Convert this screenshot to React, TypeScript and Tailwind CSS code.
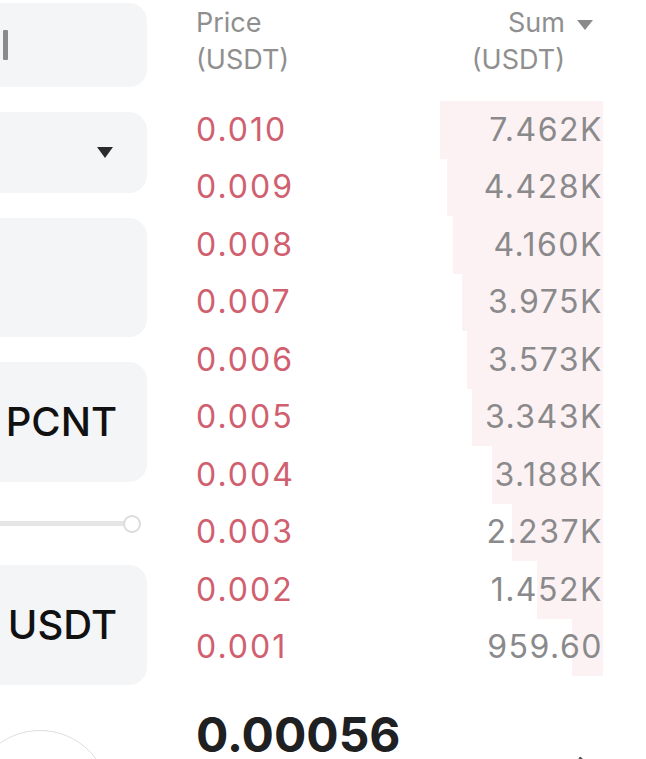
import { ChevronRight } from "lucide-react";

type Level = { price: string; sum: string; barLeft: number };

// bar left edges measured against a 407px-wide column that starts at x=196
const asks: Level[] = [
  { price: "0.010", sum: "7.462K", barLeft: 244 },
  { price: "0.009", sum: "4.428K", barLeft: 251 },
  { price: "0.008", sum: "4.160K", barLeft: 257 },
  { price: "0.007", sum: "3.975K", barLeft: 266 },
  { price: "0.006", sum: "3.573K", barLeft: 271 },
  { price: "0.005", sum: "3.343K", barLeft: 276 },
  { price: "0.004", sum: "3.188K", barLeft: 296 },
  { price: "0.003", sum: "2.237K", barLeft: 316 },
  { price: "0.002", sum: "1.452K", barLeft: 341 },
  { price: "0.001", sum: "959.60", barLeft: 376 },
];

const OrderForm = () => {
  return (
    <div className="-ml-[40px] flex w-[187px] shrink-0 flex-col pt-[3px]">
      {/* order type (text cut off) */}
      <div className="flex h-[84px] shrink-0 items-center rounded-[18px] bg-[#f4f5f7] pl-[43px]">
        <div className="h-[30px] w-[5px] rounded-[1px] bg-[#8a8a8a]" />
      </div>

      {/* dropdown */}
      <div className="mt-[25px] flex h-[81px] shrink-0 items-center justify-end rounded-[18px] bg-[#f4f5f7] pr-[34px]">
        <svg width="16" height="11" viewBox="0 0 16 11">
          <path d="M0 0H16L8 11Z" fill="#2b2b2b" />
        </svg>
      </div>

      {/* price input */}
      <div className="mt-[25px] h-[119px] shrink-0 rounded-[18px] bg-[#f4f5f7]" />

      {/* quantity */}
      <div className="mt-[25px] flex h-[120px] shrink-0 items-center justify-end rounded-[18px] bg-[#f4f5f7] pr-[30px]">
        <span className="text-[40px] font-medium leading-none text-[#111]">PCNT</span>
      </div>

      {/* slider */}
      <div className="flex h-[83px] shrink-0 items-center">
        <div className="h-[5px] w-[172px] rounded-full bg-[#e5e5e5]" />
        <div className="-ml-[9px] h-[18px] w-[18px] shrink-0 rounded-full border-[2.5px] border-[#dcdcdc] bg-white" />
      </div>

      {/* total */}
      <div className="flex h-[120px] shrink-0 items-center justify-end rounded-[18px] bg-[#f4f5f7] pr-[30px]">
        <span className="text-[40px] font-medium leading-none text-[#111]">USDT</span>
      </div>

      <div className="ml-[10px] mt-[45px] h-[140px] w-[140px] shrink-0 rounded-full border border-[#dedede]" />
    </div>
  );
};

const OrderBook = () => {
  return (
    <div className="ml-[49px] flex w-[407px] shrink-0 flex-col">
      <div className="flex justify-between pt-[4px] text-[27px] leading-[37px] text-[#8f8f8f]">
        <div>
          <div>Price</div>
          <div>(USDT)</div>
        </div>
        <div className="flex items-start pr-[10px]">
          <div className="text-right">
            <div>Sum</div>
            <div>(USDT)</div>
          </div>
          <svg width="16" height="10" viewBox="0 0 16 10" className="ml-[12px] mt-[16px]">
            <path d="M0 0H16L8 10Z" fill="#8a8a8a" />
          </svg>
        </div>
      </div>

      <div className="mt-[23px] flex flex-col">
        {asks.map((row) => (
          <div key={row.price} className="relative flex h-[57.5px] shrink-0 items-center justify-between">
            <div className="absolute inset-y-0 right-0 bg-[#fdf2f3]" style={{ left: row.barLeft }} />
            <span className="relative text-[32px] leading-none tracking-[2px] text-[#d0606f]">{row.price}</span>
            <span className="relative text-[32px] leading-none tracking-[1.5px] text-[#8a8a8c]">{row.sum}</span>
          </div>
        ))}
      </div>

      <div className="mt-[35px] flex shrink-0 items-start justify-between">
        <span className="text-[48px] font-bold leading-[48px] text-[#1f2022]">0.00056</span>
        <ChevronRight className="mr-[4px] mt-[40px] h-[30px] w-[30px] text-[#555]" strokeWidth={2.5} />
      </div>
    </div>
  );
};

export default function App() {
  return (
    <div
      className="flex h-[759px] w-[646px] overflow-hidden bg-white"
      style={{ fontFamily: "Inter, 'Liberation Sans', sans-serif" }}
    >
      <OrderForm />
      <OrderBook />
    </div>
  );
}
